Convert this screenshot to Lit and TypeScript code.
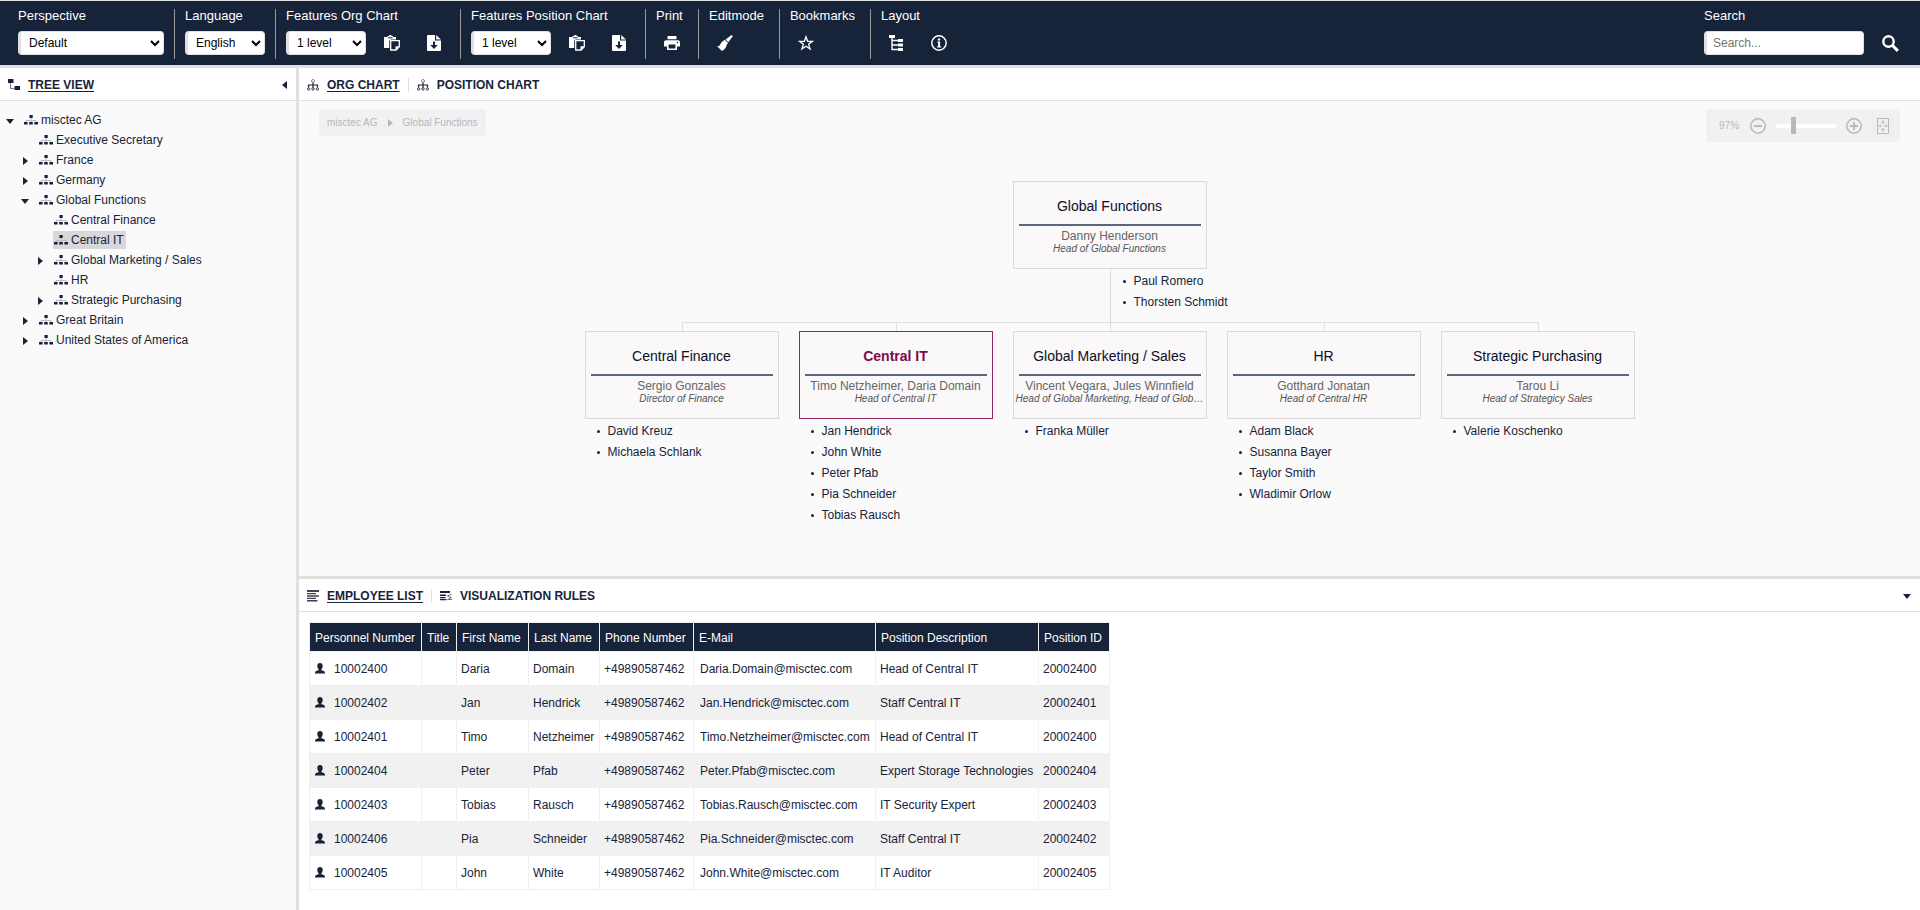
import { LitElement, html, svg, css, nothing } from "lit";
import { customElement, property, state } from "lit/decorators.js";
import { classMap } from "lit/directives/class-map.js";

const icons: Record<string, { w: number; h: number; body: unknown }> = {
  paste: {
    w: 16,
    h: 16,
    body: svg`<path fill="currentColor" d="M0 2h3.5V1h1.300c.3-.6.7-1 1.500-1s1.200.4 1.500 1H9v1h3v2.500H7.500c-1.400 0-2.300.9-2.300 2.300V13H0z"/>
      <path fill="#172339" d="M4 2.300h4.600v1H4z"/>
      <path fill="none" stroke="currentColor" stroke-width="1.300" d="M6.700 5.600h8.600v6.200l-3.200 3.200H6.700z"/>
      <path fill="currentColor" d="M11.500 11.200h4l-4 4z"/>`,
  },
  download: {
    w: 14,
    h: 16,
    body: svg`<path fill="currentColor" d="M1 0h7v5.500h6V15a1 1 0 0 1-1 1H1a1 1 0 0 1-1-1V1a1 1 0 0 1 1-1z"/>
      <path fill="currentColor" d="M9.200 0 14 4.500H9.200z"/>
      <path fill="#172339" d="M6 6.500h2V10h2.800L7 14 3.200 10H6z"/>`,
  },
  print: {
    w: 16,
    h: 16,
    body: svg`<path fill="currentColor" d="M3.500 1h9v3.200h-9zM2 5.200h12a2 2 0 0 1 2 2v4.300h-3V15H3v-3.500H0V7.200a2 2 0 0 1 2-2z"/>
      <path fill="#172339" d="M4.600 9.500h6.800v4H4.600z"/><circle cx="13.500" cy="7.500" r=".8" fill="#172339"/>`,
  },
  brush: {
    w: 16,
    h: 16,
    body: svg`<path fill="currentColor" d="M14.300.3c.6-.5 1.800.6 1.300 1.300L11.300 7.300 8.600 4.600zM7.700 4.800l3.500 3.500-1.500 1.200c.2 2.600-2.200 5-4.600 6.500L0 11.200c1.400.2 2.400-.4 3.200-1.800C4.200 7.500 5.400 6.200 6.400 5.800z"/>`,
  },
  star: {
    w: 16,
    h: 16,
    body: svg`<path fill="none" stroke="currentColor" stroke-width="1.300" d="m8 1.800 1.600 4.500h4.900l-3.900 2.900 1.500 4.800L8 11.200 3.900 14l1.500-4.800-3.900-2.900h4.900z"/>`,
  },
  layout: {
    w: 16,
    h: 16,
    body: svg`<path fill="currentColor" d="M0 0h6v3H0zM9 4h5v3H9zM9 8.500h5v3H9zM9 13h5v3H9z"/>
      <path fill="none" stroke="currentColor" stroke-width="1.400" d="M3 3v11.500h6M3 5.500h6M3 10h6"/>`,
  },
  info: {
    w: 16,
    h: 16,
    body: svg`<circle cx="8" cy="8" r="7.200" fill="none" stroke="currentColor" stroke-width="1.500"/>
      <path fill="currentColor" d="M6.900 3.500h2.200v2H6.900zM6.200 6.500h2.900v4.800h1v1.100H6.100v-1.100h1V7.600h-.9z"/>`,
  },
  search: {
    w: 17,
    h: 17,
    body: svg`<circle cx="6.500" cy="6.500" r="5.200" fill="none" stroke="currentColor" stroke-width="2.400"/>
      <path stroke="currentColor" stroke-width="3" d="m10.300 10.300 5.600 5.600"/>`,
  },
  hierarchy: {
    w: 12,
    h: 12,
    body: svg`<path fill="currentColor" d="M0 0h5.500v4H0zM6.500 7H12v4H6.500z"/>
      <path fill="none" stroke="#76757f" d="M2.500 4v5.500h4"/>`,
  },
  org: {
    w: 12,
    h: 12,
    body: svg`<g fill="none" stroke="#3c4155"><path d="M6 3.500V9M1.500 8.500V6h9v2.500" stroke="#172339" stroke-width="1.200"/>
      <circle cx="6" cy="2" r="1.500" stroke="#7a8598"/><circle cx="1.700" cy="10" r="1.200"/><circle cx="6" cy="10" r="1.200"/><circle cx="10.300" cy="10" r="1.200"/></g>`,
  },
  unit: {
    w: 14,
    h: 10,
    body: svg`<path fill="none" stroke="#b9bcc4" d="M2 7V5.500h10V7M7 3v4"/>
      <path fill="currentColor" d="M5.500 0h3.200v3H5.500zM0 7h3.600v2.500H0zM5.200 7h3.600v2.500H5.200zM10.400 7H14v2.500h-3.600z"/>`,
  },
  lines: {
    w: 12,
    h: 12,
    body: svg`<path fill="#3f4356" d="M0 0h12v2H0zM0 3h9v1.300H0zM0 5.300h12v1.500H0zM0 7.800h9v1.300H0zM0 10h10.500v1.500H0z"/>`,
  },
  rules: {
    w: 12,
    h: 12,
    body: svg`<path fill="#172339" d="M0 1h10v2H0zM0 4.500h6V6H0zM0 7h5.500v1.300H0zM0 9h6.500v1.200H0z"/>
      <path fill="none" stroke="#77717f" d="M11.500 4 7.500 6l4 1.500-4 2H12"/>`,
  },
  person: {
    w: 10,
    h: 11,
    body: svg`<path fill="currentColor" d="M5 0c1.700 0 2.700 1.100 2.700 2.900 0 1.500-.6 2.800-1.300 3.400v.9c1.700.4 3.600.9 3.600 2.600v.7H0v-.7c0-1.700 1.900-2.200 3.600-2.600v-.9C2.900 5.700 2.300 4.400 2.300 2.900 2.300 1.100 3.300 0 5 0z"/>`,
  },
  right: { w: 5, h: 8, body: svg`<path fill="currentColor" d="M0 0l5 4-5 4z"/>` },
  left: { w: 5, h: 8, body: svg`<path fill="currentColor" d="M5 0 0 4l5 4z"/>` },
  down: { w: 8, h: 5, body: svg`<path fill="currentColor" d="M0 0h8L4 5z"/>` },
  minus: {
    w: 16,
    h: 16,
    body: svg`<g fill="none" stroke="currentColor" stroke-width="1.500"><circle cx="8" cy="8" r="7.200"/><path stroke-width="2" d="M4 8h8"/></g>`,
  },
  plus: {
    w: 16,
    h: 16,
    body: svg`<g fill="none" stroke="currentColor" stroke-width="1.500"><circle cx="8" cy="8" r="7.200"/><path stroke-width="1.800" d="M4 8h8M8 4v8"/></g>`,
  },
  fit: {
    w: 12,
    h: 16,
    body: svg`<path fill="none" stroke="currentColor" d="M.5.5h11v15H.5z"/>
      <path fill="currentColor" d="M5.500 2h1v2H8L6 6 4 4h1.500zM5.500 14h1v-2H8l-2-2-2 2h1.500zM1.500 7.500h1.300V6.200L4.800 8l-2 1.800V8.500H1.500zM10.500 7.500H9.200V6.200L7.200 8l2 1.800V8.500h1.300z"/>`,
  },
};

const icon = (name: string) => {
  const i = icons[name];
  return html`<svg width=${i.w} height=${i.h} viewBox="0 0 ${i.w} ${i.h}" aria-hidden="true">${i.body}</svg>`;
};

const base = css`
  * {
    box-sizing: border-box;
  }
  svg {
    display: block;
    flex: none;
  }
  button {
    font: inherit;
    color: inherit;
    background: none;
    border: 0;
    padding: 0;
    display: flex;
    align-items: center;
    justify-content: center;
    cursor: pointer;
  }
  a {
    color: inherit;
    text-decoration: none;
  }
  ul,
  ol {
    list-style: none;
    margin: 0;
    padding: 0;
  }
`;

@customElement("app-toolbar")
class AppToolbar extends LitElement {
  static styles = [
    base,
    css`
      :host {
        display: flex;
        justify-content: space-between;
        background: #172339;
        color: #fff;
        border-top: 1px solid #e0e0e0;
        border-bottom: 3px solid #e0e0e0;
        padding: 8px 4px 6px 7px;
        font-size: 13px;
        line-height: 14px;
      }
      .groups {
        display: flex;
      }
      .group {
        padding: 0 10px 4px;
      }
      .group + .group {
        border-left: 1px solid #999;
      }
      .groups .group:first-child {
        padding-left: 11px;
      }
      .title {
        display: block;
        margin-bottom: 8px;
        padding-right: 5px;
        white-space: nowrap;
      }
      .controls {
        display: flex;
        align-items: center;
        gap: 10px;
        height: 24px;
      }
      .iconbtn {
        width: 32px;
        height: 24px;
      }
      .field {
        height: 24px;
        border: 1px solid #e0e0e0;
        border-left-width: 3px;
        border-radius: 4px;
        background: #fff;
        color: #000;
        font-family: inherit;
        font-size: 12px;
      }
      select.field {
        width: 80px;
        padding: 0 0 0 4px;
      }
      select.wide {
        width: 146px;
      }
      input.field {
        width: 160px;
        padding: 0 6px;
      }
      .field::placeholder {
        color: #757575;
      }
    `,
  ];

  private levels(id: string, title: string) {
    return html`<div class="group">
      <label class="title" for=${id}>${title}</label>
      <div class="controls">
        <select class="field" id=${id}>
          <option>1 level</option>
          <option>2 levels</option>
          <option>3 levels</option>
        </select>
        <button class="iconbtn" aria-label="Copy">${icon("paste")}</button>
        <button class="iconbtn" aria-label="Download">${icon("download")}</button>
      </div>
    </div>`;
  }

  private actions(title: string, names: string[]) {
    return html`<div class="group">
      <span class="title">${title}</span>
      <div class="controls">
        ${names.map((n) => html`<button class="iconbtn" aria-label=${n}>${icon(n)}</button>`)}
      </div>
    </div>`;
  }

  render() {
    return html`
      <div class="groups">
        <div class="group">
          <label class="title" for="perspective">Perspective</label>
          <div class="controls">
            <select class="field wide" id="perspective"><option>Default</option></select>
          </div>
        </div>
        <div class="group">
          <label class="title" for="language">Language</label>
          <div class="controls">
            <select class="field" id="language"><option>English</option></select>
          </div>
        </div>
        ${this.levels("org-levels", "Features Org Chart")}
        ${this.levels("pos-levels", "Features Position Chart")}
        ${this.actions("Print", ["print"])} ${this.actions("Editmode", ["brush"])}
        ${this.actions("Bookmarks", ["star"])} ${this.actions("Layout", ["layout", "info"])}
      </div>
      <div class="group">
        <label class="title" for="search">Search</label>
        <div class="controls">
          <input class="field" id="search" type="search" placeholder="Search..." />
          <button class="iconbtn" aria-label="Search">${icon("search")}</button>
        </div>
      </div>
    `;
  }
}

interface Tab {
  icon: string;
  label: string;
}

@customElement("tab-bar")
class TabBar extends LitElement {
  @property({ attribute: false }) tabs: Tab[] = [];
  @property() collapse = "";
  @state() private active = 0;

  static styles = [
    base,
    css`
      :host {
        display: flex;
        align-items: center;
        box-sizing: border-box;
        height: 33px;
        padding: 2px 9px 0 8px;
        background: #fff;
        border-bottom: 1px solid #e0e0e0;
        color: #172339;
        font-size: 12px;
        line-height: 14px;
        font-weight: bold;
      }
      .tab {
        gap: 8px;
      }
      .tab + .tab {
        margin-left: 8px;
        border-left: 1px solid #e0e0e0;
        padding-left: 8px;
      }
      .active {
        text-decoration: underline;
        text-underline-offset: 2px;
      }
      .collapse {
        margin-left: auto;
      }
    `,
  ];

  render() {
    return html`${this.tabs.map(
      (t, i) => html`<button class="tab" @click=${() => (this.active = i)}>
        ${icon(t.icon)}<span class=${classMap({ active: i === this.active })}>${t.label}</span>
      </button>`
    )}
    ${this.collapse
      ? html`<button class="collapse" aria-label="Collapse panel">${icon(this.collapse)}</button>`
      : nothing}`;
  }
}

interface TreeNode {
  name: string;
  closed?: boolean;
  selected?: boolean;
  children?: TreeNode[];
}

const tree: TreeNode = {
  name: "misctec AG",
  children: [
    { name: "Executive Secretary" },
    { name: "France", closed: true },
    { name: "Germany", closed: true },
    {
      name: "Global Functions",
      children: [
        { name: "Central Finance" },
        { name: "Central IT", selected: true },
        { name: "Global Marketing / Sales", closed: true },
        { name: "HR" },
        { name: "Strategic Purchasing", closed: true },
      ],
    },
    { name: "Great Britain", closed: true },
    { name: "United States of America", closed: true },
  ],
};

@customElement("org-tree")
class OrgTree extends LitElement {
  static styles = [
    base,
    css`
      :host {
        display: block;
        padding: 9px 0 0 4px;
        color: #172339;
        font-size: 12px;
        line-height: 18px;
      }
      .row {
        display: flex;
        align-items: center;
        gap: 7px;
        height: 20px;
      }
      .toggle {
        width: 12px;
        height: 20px;
        padding-top: 2px;
      }
      .label {
        display: flex;
        align-items: center;
        gap: 3px;
        padding: 0 2px 0 1px;
        white-space: nowrap;
      }
      .selected {
        background: #d8d8d8;
      }
      .children {
        padding-left: 15px;
      }
    `,
  ];

  private node(n: TreeNode): unknown {
    return html`<li>
      <div class="row">
        ${n.closed || n.children
          ? html`<button class="toggle" aria-label="Toggle ${n.name}">
              ${icon(n.closed ? "right" : "down")}
            </button>`
          : html`<span class="toggle"></span>`}
        <a class=${classMap({ label: true, selected: !!n.selected })} href="#">${icon("unit")}${n.name}</a>
      </div>
      ${n.children ? html`<ul class="children">${n.children.map((c) => this.node(c))}</ul>` : nothing}
    </li>`;
  }

  render() {
    return html`<ul>${this.node(tree)}</ul>`;
  }
}

interface Unit {
  title: string;
  head: string;
  role: string;
  staff: string[];
  selected?: boolean;
}

const root: Unit = {
  title: "Global Functions",
  head: "Danny Henderson",
  role: "Head of Global Functions",
  staff: ["Paul Romero", "Thorsten Schmidt"],
};

const units: Unit[] = [
  {
    title: "Central Finance",
    head: "Sergio Gonzales",
    role: "Director of Finance",
    staff: ["David Kreuz", "Michaela Schlank"],
  },
  {
    title: "Central IT",
    head: "Timo Netzheimer, Daria Domain",
    role: "Head of Central IT",
    staff: ["Jan Hendrick", "John White", "Peter Pfab", "Pia Schneider", "Tobias Rausch"],
    selected: true,
  },
  {
    title: "Global Marketing / Sales",
    head: "Vincent Vegara, Jules Winnfield",
    role: "Head of Global Marketing, Head of Glob…",
    staff: ["Franka Müller"],
  },
  {
    title: "HR",
    head: "Gotthard Jonatan",
    role: "Head of Central HR",
    staff: ["Adam Black", "Susanna Bayer", "Taylor Smith", "Wladimir Orlow"],
  },
  {
    title: "Strategic Purchasing",
    head: "Tarou Li",
    role: "Head of Strategicy Sales",
    staff: ["Valerie Koschenko"],
  },
];

@customElement("org-chart")
class OrgChart extends LitElement {
  @state() private zoom = 97;

  static styles = [
    base,
    css`
      :host {
        display: block;
        color: #172339;
        font-size: 12px;
      }
      .bar {
        display: flex;
        justify-content: space-between;
        align-items: flex-start;
        padding: 8px 20px 0;
        margin-bottom: 39px;
        font-size: 10px;
        color: #b4b8c0;
      }
      .crumbs {
        display: flex;
        align-items: center;
        gap: 10px;
        height: 27px;
        padding: 0 8px;
        background: #f1f1f1;
        border-radius: 4px;
      }
      .zoom {
        display: flex;
        align-items: center;
        height: 33px;
        padding: 0 5px 0 13px;
        background: #f1f1f1;
        border-radius: 4px;
      }
      .percent {
        width: 31px;
      }
      .slider {
        appearance: none;
        width: 60px;
        height: 17px;
        margin: 0 10px;
        background: none;
      }
      .slider::-webkit-slider-runnable-track {
        height: 4px;
        border-radius: 2px;
        background: #fff;
      }
      .slider::-webkit-slider-thumb {
        appearance: none;
        width: 5px;
        height: 17px;
        margin-top: -7px;
        background: #b4b8c0;
      }
      .fit {
        width: 24px;
        height: 24px;
        margin-left: 9px;
        background: #efefef;
      }
      .chart {
        display: flex;
        flex-direction: column;
        align-items: center;
      }
      .box {
        width: 194px;
        height: 88px;
        padding: 11px 5px 0;
        border: 1px solid #d9d9d9;
        background: #faf8f9;
        text-align: center;
      }
      .title {
        margin: 0;
        padding: 4px 0 9px;
        border-bottom: 2px solid #5b667c;
        font-size: 14px;
        line-height: 18px;
        font-weight: normal;
        color: #0c0f1f;
      }
      .head {
        margin: 0;
        padding-top: 4px;
        line-height: 13px;
        color: #666;
      }
      .role {
        margin: 0 -4px;
        font-size: 10px;
        line-height: 12px;
        font-style: italic;
        color: #555;
        white-space: nowrap;
      }
      .selected {
        border-color: #92285f;
      }
      .selected .title {
        font-weight: bold;
        color: #7d0a48;
      }
      .staff {
        padding: 2px 0 0 12px;
        line-height: 21px;
      }
      .person {
        display: flex;
        align-items: center;
        gap: 8px;
        white-space: nowrap;
      }
      .person::before {
        content: "";
        flex: none;
        width: 3px;
        height: 3px;
        border-radius: 50%;
        background: #172339;
      }
      .trunk {
        display: grid;
        grid-template-columns: repeat(2, minmax(0, 1fr));
        width: 194px;
      }
      .trunk .staff {
        grid-column: 2;
        padding-bottom: 9px;
        border-left: 1px solid #d9d9d9;
      }
      .units {
        display: flex;
      }
      .unit {
        width: 214px;
      }
      .branch {
        display: grid;
        grid-template-columns: 1fr 1fr;
        height: 9px;
      }
      .arm {
        border-top: 1px solid #dedede;
      }
      .drop {
        border-left: 1px solid #dedede;
      }
      .unit:first-child .arm:first-child,
      .unit:last-child .drop {
        border-top: 0;
      }
      .cell {
        padding: 0 10px;
      }
    `,
  ];

  private staff(u: Unit) {
    return html`<ul class="staff">${u.staff.map((p) => html`<li class="person">${p}</li>`)}</ul>`;
  }

  private box(u: Unit) {
    return html`<div class=${classMap({ box: true, selected: !!u.selected })}>
      <h3 class="title">${u.title}</h3>
      <p class="head">${u.head}</p>
      <p class="role">${u.role}</p>
    </div>`;
  }

  render() {
    return html`
      <div class="bar">
        <nav class="crumbs"><a href="#">misctec AG</a>${icon("right")}<a href="#">Global Functions</a></nav>
        <div class="zoom">
          <span class="percent">${this.zoom}%</span>
          <button aria-label="Zoom out" @click=${() => this.zoom--}>${icon("minus")}</button>
          <input
            class="slider"
            type="range"
            aria-label="Zoom"
            min="50"
            max="225"
            .value=${String(this.zoom)}
            @input=${(e: Event) => (this.zoom = +(e.target as HTMLInputElement).value)}
          />
          <button aria-label="Zoom in" @click=${() => this.zoom++}>${icon("plus")}</button>
          <button class="fit" aria-label="Fit chart">${icon("fit")}</button>
        </div>
      </div>
      <div class="chart">
        ${this.box(root)}
        <div class="trunk">${this.staff(root)}</div>
        <div class="units">
          ${units.map(
            (u) => html`<div class="unit">
              <div class="branch"><span class="arm"></span><span class="arm drop"></span></div>
              <div class="cell">${this.box(u)}${this.staff(u)}</div>
            </div>`
          )}
        </div>
      </div>
    `;
  }
}

const columns = [
  { label: "Personnel Number", width: 112 },
  { label: "Title", width: 35 },
  { label: "First Name", width: 72 },
  { label: "Last Name", width: 71 },
  { label: "Phone Number", width: 94 },
  { label: "E-Mail", width: 182 },
  { label: "Position Description", width: 163 },
  { label: "Position ID", width: 71 },
];

const employees = [
  ["10002400", "Daria", "Domain", "Head of Central IT", "20002400"],
  ["10002402", "Jan", "Hendrick", "Staff Central IT", "20002401"],
  ["10002401", "Timo", "Netzheimer", "Head of Central IT", "20002400"],
  ["10002404", "Peter", "Pfab", "Expert Storage Technologies", "20002404"],
  ["10002403", "Tobias", "Rausch", "IT Security Expert", "20002403"],
  ["10002406", "Pia", "Schneider", "Staff Central IT", "20002402"],
  ["10002405", "John", "White", "IT Auditor", "20002405"],
];

@customElement("employee-table")
class EmployeeTable extends LitElement {
  static styles = [
    base,
    css`
      :host {
        display: block;
        padding: 10px 10px 20px;
        background: #fff;
        color: #172339;
        font-size: 12px;
        line-height: 14px;
      }
      .table {
        border-collapse: collapse;
        table-layout: fixed;
        width: 0;
      }
      th,
      td {
        padding: 0 4px;
        border: 1px solid #f0f0f0;
        text-align: left;
        font-weight: normal;
        white-space: nowrap;
      }
      th {
        height: 29px;
        padding: 2px 4px 0 5px;
        background: #172339;
        color: #fff;
      }
      td {
        height: 34px;
      }
      tbody tr:nth-child(even) {
        background: #f1f1f1;
      }
      .mail {
        padding-left: 6px;
      }
      .number {
        display: flex;
        align-items: center;
        gap: 9px;
        padding-left: 1px;
      }
    `,
  ];

  render() {
    return html`<table class="table">
      <colgroup>
        ${columns.map((c) => html`<col style="width:${c.width}px" />`)}
      </colgroup>
      <thead>
        <tr>
          ${columns.map((c) => html`<th scope="col">${c.label}</th>`)}
        </tr>
      </thead>
      <tbody>
        ${employees.map(
          ([id, first, last, job, position]) => html`<tr>
            <td><span class="number">${icon("person")}${id}</span></td>
            <td></td>
            <td>${first}</td>
            <td>${last}</td>
            <td>+49890587462</td>
            <td class="mail">${first}.${last}@misctec.com</td>
            <td>${job}</td>
            <td>${position}</td>
          </tr>`
        )}
      </tbody>
    </table>`;
  }
}

@customElement("app-root")
class AppRoot extends LitElement {
  static styles = [
    base,
    css`
      :host {
        display: flex;
        flex-direction: column;
        min-height: 100vh;
        background: #fafafa;
        font-family: "Liberation Sans", Arial, sans-serif;
      }
      .body {
        flex: 1;
        display: grid;
        grid-template-columns: 299px minmax(0, 1fr);
      }
      .side {
        border-right: 3px solid #e0e0e0;
      }
      .main {
        display: flex;
        flex-direction: column;
      }
      .upper {
        flex: 1;
        border-bottom: 3px solid #e0e0e0;
      }
    `,
  ];

  render() {
    return html`
      <app-toolbar></app-toolbar>
      <div class="body">
        <aside class="side">
          <tab-bar .tabs=${[{ icon: "hierarchy", label: "TREE VIEW" }]} collapse="left"></tab-bar>
          <org-tree></org-tree>
        </aside>
        <main class="main">
          <section class="upper">
            <tab-bar
              .tabs=${[
                { icon: "org", label: "ORG CHART" },
                { icon: "org", label: "POSITION CHART" },
              ]}
            ></tab-bar>
            <org-chart></org-chart>
          </section>
          <section>
            <tab-bar
              .tabs=${[
                { icon: "lines", label: "EMPLOYEE LIST" },
                { icon: "rules", label: "VISUALIZATION RULES" },
              ]}
              collapse="down"
            ></tab-bar>
            <employee-table></employee-table>
          </section>
        </main>
      </div>
    `;
  }
}
